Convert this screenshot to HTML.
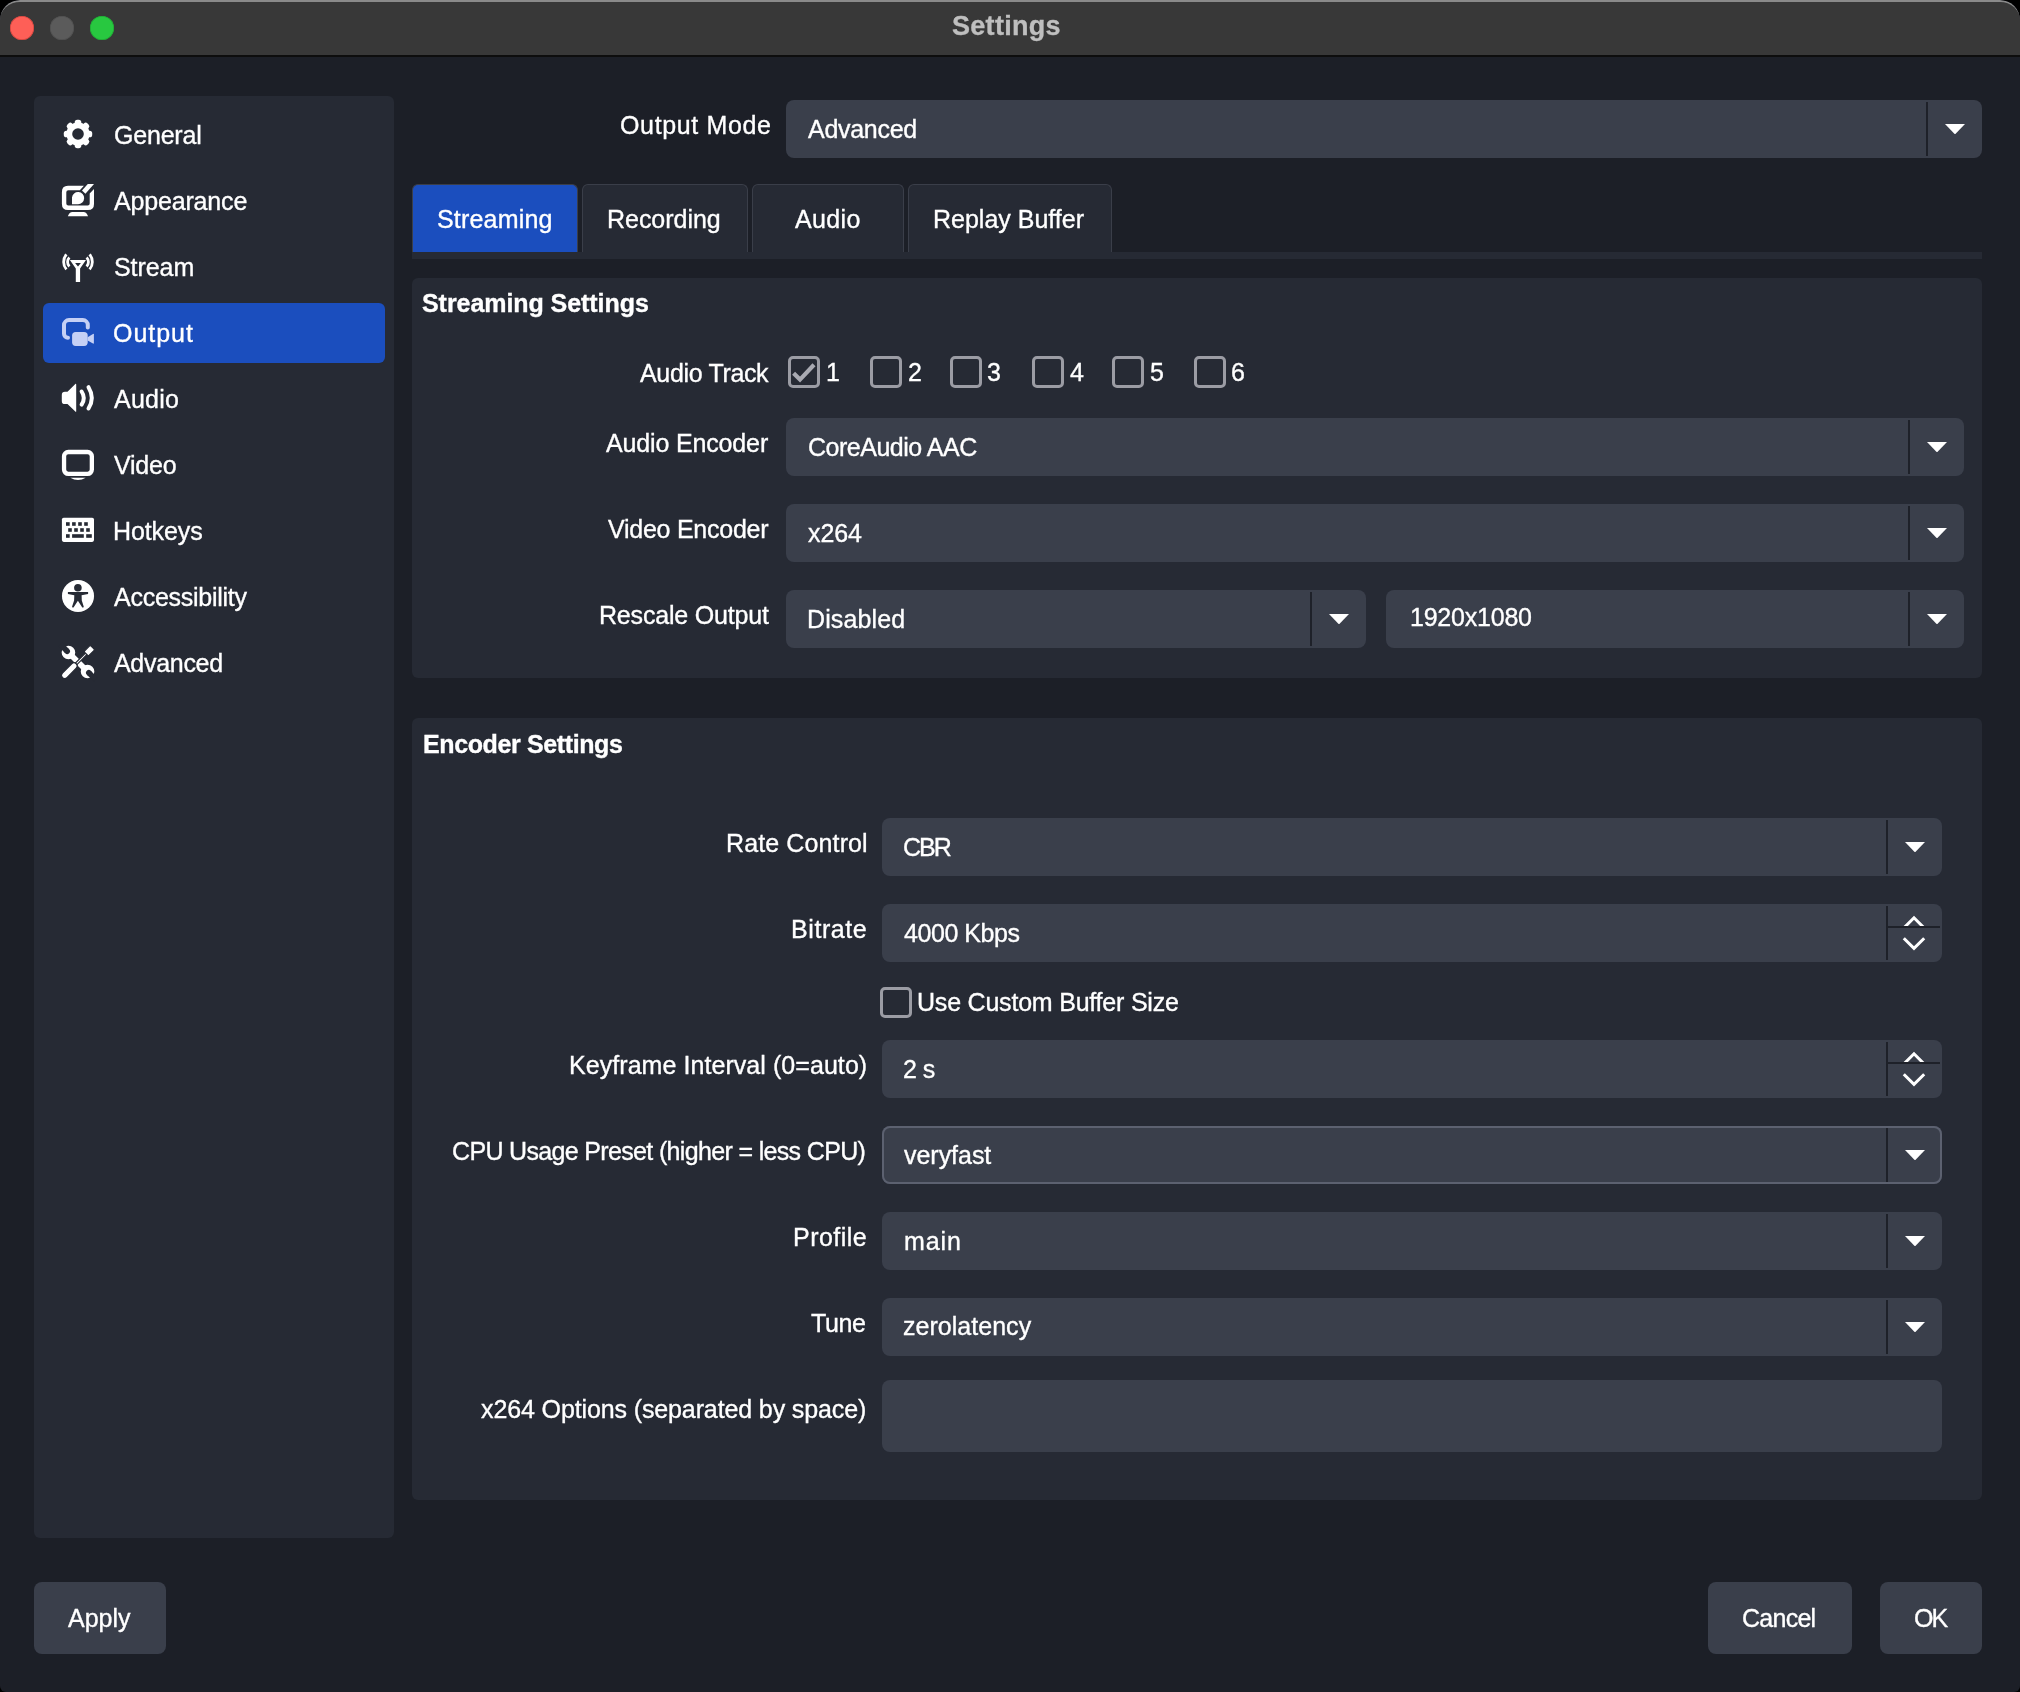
<!DOCTYPE html>
<html><head><meta charset="utf-8"><style>
html,body{margin:0;padding:0;width:2020px;height:1692px;overflow:hidden;background:#000000;}
*{box-sizing:border-box;}
body{font-family:"Liberation Sans",sans-serif;color:#fff;position:relative;}
.a{position:absolute;}
.win{position:absolute;left:0;top:0;width:2020px;height:1692px;background:#1c1f27;border-radius:20px 20px 6px 6px;overflow:hidden;}
.t{position:absolute;font-size:25px;line-height:25px;height:25px;white-space:pre;color:#ffffff;-webkit-text-stroke:0.35px currentColor;will-change:transform;}
</style></head><body>
<div class="win">
<div class="a" style="left:0;top:0;width:2020px;height:57px;background:#383838;border-top:2px solid #8a8a8a;border-bottom:2px solid #0d0d0d;border-radius:20px 20px 0 0;"></div>
<div class="a" style="left:10px;top:16px;width:24px;height:24px;border-radius:50%;background:#fe5f57;box-shadow:inset 0 0 0 0.7px #d1443d;"></div>
<div class="a" style="left:50px;top:16px;width:24px;height:24px;border-radius:50%;background:#5b5b5b;box-shadow:inset 0 0 0 0.7px #505050;"></div>
<div class="a" style="left:90px;top:16px;width:24px;height:24px;border-radius:50%;background:#28c840;box-shadow:inset 0 0 0 0.7px #1faa33;"></div>
<div class="t" style="left:952.0px;top:13.1px;font-size:27px;line-height:27px;height:27px;font-weight:700;letter-spacing:0.29px;color:#bfbfbf;">Settings</div>
<div class="a" style="left:34px;top:96px;width:360px;height:1441.5px;background:#262a34;border-radius:6px;"></div>
<div class="a" style="left:42.8px;top:303.2px;width:342.1px;height:59.4px;background:#1b4ebe;border-radius:6px;"></div>
<svg class="a" style="left:58px;top:114px;" width="40" height="40" viewBox="0 0 40 40">
 <g fill="#fff" transform="translate(20,20)">
  <circle r="11.6"/>
  <rect x="-3.3" y="-14.2" width="6.6" height="28.4" rx="2.6"/>
  <rect x="-3.3" y="-14.2" width="6.6" height="28.4" rx="2.6" transform="rotate(45)"/>
  <rect x="-3.3" y="-14.2" width="6.6" height="28.4" rx="2.6" transform="rotate(90)"/>
  <rect x="-3.3" y="-14.2" width="6.6" height="28.4" rx="2.6" transform="rotate(135)"/>
  <circle r="5.8" fill="#262a34"/>
 </g>
</svg>
<svg class="a" style="left:58px;top:180px;" width="40" height="40" viewBox="0 0 40 40">
 <path d="M25.9 5.8 L10 5.8 Q3.9 5.8 3.9 11.9 L3.9 24 Q3.9 30 10 30 L30 30 Q36 30 36 24 L36 9 L31.7 13.4 L31.7 23.6 Q31.7 25.6 29.7 25.6 L10.3 25.6 Q8.3 25.6 8.3 23.6 L8.3 12.2 Q8.3 10.2 10.3 10.2 L21.8 10.2 Z" fill="#fff"/>
 <path d="M29.8 4 L36 4 L27.4 13.7 L24 10.6 Z" fill="#fff"/>
 <path d="M14 24.2 L14 17.5 A6.1 6.1 0 1 1 20 24.2 Z" fill="#fff"/>
 <path d="M9.8 36.2 L30.1 36.2 Q28.5 31.9 25.5 31.9 L14.4 31.9 Q11.4 31.9 9.8 36.2 Z" fill="#fff"/>
</svg>
<svg class="a" style="left:58px;top:248px;" width="40" height="40" viewBox="0 0 40 40">
 <g fill="none" stroke="#fff" stroke-width="2.8">
  <path d="M8.4 6.4 A11.6 11.6 0 0 0 8.4 21.4"/>
  <path d="M11.4 9.6 A6.2 6.2 0 0 0 11.4 18.4"/>
  <path d="M31.6 6.4 A11.6 11.6 0 0 1 31.6 21.4"/>
  <path d="M28.6 9.6 A6.2 6.2 0 0 1 28.6 18.4"/>
 </g>
 <path fill="#fff" fill-rule="evenodd" d="M11.9 11.9 L28 11.9 L22.1 20.5 L22.1 34 L17.8 34 L17.8 20.5 Z M17.1 15.1 L22.9 15.1 L20 18.4 Z"/>
</svg>
<svg class="a" style="left:58px;top:313px;" width="40" height="40" viewBox="0 0 40 40">
 <path d="M29.8 14.6 L29.8 12.1 A5 5 0 0 0 24.8 7.1 L11 7.1 A5 5 0 0 0 6 12.1 L6 20.7 A4 4 0 0 0 10 24.7" fill="none" stroke="#c5d0f5" stroke-width="4" stroke-linecap="round"/>
 <rect x="14.1" y="18.9" width="15.6" height="14" rx="3.6" fill="#c5d0f5"/>
 <path d="M29.6 24.2 L35 20.9 Q35.9 20.5 35.9 21.5 L35.9 30 Q35.9 31 35 30.6 L29.6 27.6 Z" fill="#c5d0f5"/>
</svg>
<svg class="a" style="left:58px;top:378px;" width="40" height="40" viewBox="0 0 40 40">
 <path d="M17.6 5.8 Q18.2 5.6 18.2 6.6 L18.2 33.2 Q18.2 34.2 17.6 33.8 L9.5 26.1 L7 26.1 Q3.8 26.1 3.8 22.9 L3.8 16.9 Q3.8 13.7 7 13.7 L9.5 13.7 Z" fill="#fff"/>
 <g fill="none" stroke="#fff" stroke-width="4" stroke-linecap="round">
  <path d="M23.6 13.5 Q28 20.1 23.6 26.7"/>
  <path d="M30.5 9.2 Q37.1 19.9 30.5 30.5"/>
 </g>
</svg>
<svg class="a" style="left:58px;top:444px;" width="40" height="40" viewBox="0 0 40 40">
 <rect x="6.05" y="8" width="27.8" height="21.9" rx="4.3" fill="none" stroke="#fff" stroke-width="4.3"/>
 <path d="M12.3 33.7 L27.7 33.7 Q20 38.5 12.3 33.7 Z" fill="#fff"/>
</svg>
<svg class="a" style="left:58px;top:510px;" width="40" height="40" viewBox="0 0 40 40">
 <rect x="3.9" y="7.8" width="32.1" height="24.1" rx="1.8" fill="#fff"/>
 <g fill="#262a34">
  <rect x="8" y="12.2" width="3.7" height="3.6"/><rect x="14.1" y="12.2" width="3.6" height="3.6"/><rect x="20.2" y="12.2" width="3.6" height="3.6"/><rect x="26.2" y="12.2" width="3.6" height="3.6"/>
  <rect x="10.2" y="18.2" width="3.6" height="3.6"/><rect x="16.2" y="18.2" width="3.6" height="3.6"/><rect x="22.2" y="18.2" width="3.6" height="3.6"/><rect x="28.2" y="18.2" width="3.6" height="3.6"/>
  <rect x="8" y="24.2" width="3.7" height="3.6"/><rect x="14.1" y="24.2" width="11.7" height="3.6"/><rect x="28.2" y="24.2" width="5.6" height="3.6"/>
 </g>
</svg>
<svg class="a" style="left:58px;top:576px;" width="40" height="40" viewBox="0 0 40 40">
 <circle cx="20" cy="20" r="16.05" fill="#fff"/>
 <circle cx="19.9" cy="11.8" r="3.8" fill="#262a34"/>
 <path d="M9.9 16.1 L30.1 16.1 L30.1 18 L23.6 19.2 L23.8 24.5 L25.7 30.4 Q26 31.5 25 31.5 L24.3 31.5 L19.9 24.8 L15.5 31.5 L14.8 31.5 Q13.8 31.5 14.1 30.4 L16.1 24.5 L16.3 19.2 L9.9 18 Z" fill="#262a34"/>
</svg>
<svg class="a" style="left:58px;top:642px;" width="40" height="40" viewBox="0 0 40 40">
 <g transform="rotate(45 20 20)">
  <g fill="#fff">
   <rect x="6.5" y="17.2" width="27" height="5.6"/>
   <circle cx="6.5" cy="20" r="6.8"/>
   <circle cx="33.5" cy="20" r="6.8"/>
  </g>
  <g fill="#262a34">
   <rect x="-5" y="17.2" width="9.7" height="5.6"/>
   <circle cx="4.7" cy="20" r="2.8"/>
   <rect x="35.3" y="17.2" width="10" height="5.6"/>
   <circle cx="35.3" cy="20" r="2.8"/>
  </g>
 </g>
 <g transform="rotate(-45 20 20)">
  <g fill="#fff" stroke="#262a34" stroke-width="1.2">
   <rect x="16.5" y="18.9" width="16.5" height="2.2"/>
   <rect x="-2" y="16.8" width="19.5" height="6.4" rx="3.2"/>
   <rect x="31.5" y="16.8" width="9" height="6.4" rx="1.2"/>
  </g>
 </g>
</svg>

<div class="t" style="left:113.9px;top:122.8px;letter-spacing:-0.2px;">General</div>
<div class="t" style="left:114.0px;top:189.0px;letter-spacing:-0.17px;">Appearance</div>
<div class="t" style="left:113.7px;top:255.0px;letter-spacing:-0.06px;">Stream</div>
<div class="t" style="left:113.4px;top:321.2px;letter-spacing:0.96px;">Output</div>
<div class="t" style="left:114.0px;top:387.0px;letter-spacing:0.24px;">Audio</div>
<div class="t" style="left:114.0px;top:453.0px;letter-spacing:-0.24px;">Video</div>
<div class="t" style="left:113.4px;top:519.0px;letter-spacing:-0.1px;">Hotkeys</div>
<div class="t" style="left:114.0px;top:584.8px;letter-spacing:-0.26px;">Accessibility</div>
<div class="t" style="left:114.0px;top:651.0px;letter-spacing:-0.3px;">Advanced</div>
<div class="t" style="left:619.5px;top:113.0px;letter-spacing:0.64px;">Output Mode</div>
<div class="a" style="left:786px;top:100px;width:1196px;height:57.5px;background:#3a3f4b;border-radius:8px;"></div>
<div class="a" style="left:1926px;top:102px;width:2px;height:53.5px;background:#1e2129;"></div>
<svg class="a" style="left:1945.4px;top:123.6px;" width="20" height="10.4" viewBox="0 0 20 10.4"><path d="M0 0 L20 0 L10 10.4 Z" fill="#fff"/></svg>
<div class="t" style="left:808.0px;top:117.2px;letter-spacing:-0.29px;">Advanced</div>
<div class="a" style="left:412px;top:252.3px;width:1570px;height:7.2px;background:#262a34;"></div>
<div class="a" style="left:412px;top:184px;width:166px;height:68.3px;background:#1b4ebe;border:1.5px solid #3a3e49;border-bottom:none;border-radius:6px 6px 0 0;"></div>
<div class="a" style="left:582px;top:184px;width:166.20000000000005px;height:68.3px;background:#262a34;border:1.7px solid #3a3e49;border-bottom:none;border-radius:6px 6px 0 0;"></div>
<div class="a" style="left:752px;top:184px;width:151.60000000000002px;height:68.3px;background:#262a34;border:1.7px solid #3a3e49;border-bottom:none;border-radius:6px 6px 0 0;"></div>
<div class="a" style="left:908px;top:184px;width:203.5999999999999px;height:68.3px;background:#262a34;border:1.7px solid #3a3e49;border-bottom:none;border-radius:6px 6px 0 0;"></div>
<div class="t" style="left:437.0px;top:206.8px;letter-spacing:0.19px;">Streaming</div>
<div class="t" style="left:607.3px;top:206.8px;letter-spacing:-0.03px;">Recording</div>
<div class="t" style="left:794.9px;top:206.8px;letter-spacing:0.38px;">Audio</div>
<div class="t" style="left:933.4px;top:206.8px;">Replay Buffer</div>
<div class="a" style="left:412px;top:278px;width:1570px;height:400px;background:#262a34;border-radius:6px;"></div>
<div class="t" style="left:422.0px;top:290.6px;font-weight:700;letter-spacing:-0.06px;">Streaming Settings</div>
<div class="t" style="left:639.6px;top:360.6px;letter-spacing:-0.34px;">Audio Track</div>
<div class="a" style="left:788.2px;top:356.2px;width:31.4px;height:31.6px;border:3px solid #9b9ca4;border-radius:5px;"></div>
<svg class="a" style="left:780.0px;top:345.1px;" width="50" height="50" viewBox="0 0 50 50"><path d="M13.6 28.3 L20 34.6 L34 19.8" fill="none" stroke="#a9aab2" stroke-width="4.2"/></svg>
<div class="t" style="left:826.0px;top:360.0px;">1</div>
<div class="a" style="left:870.2px;top:356.2px;width:31.4px;height:31.6px;border:3px solid #9b9ca4;border-radius:5px;"></div>
<div class="t" style="left:907.8px;top:360.0px;">2</div>
<div class="a" style="left:950.3px;top:356.2px;width:31.4px;height:31.6px;border:3px solid #9b9ca4;border-radius:5px;"></div>
<div class="t" style="left:987.3px;top:360.0px;">3</div>
<div class="a" style="left:1032.2px;top:356.2px;width:31.4px;height:31.6px;border:3px solid #9b9ca4;border-radius:5px;"></div>
<div class="t" style="left:1069.9px;top:360.0px;">4</div>
<div class="a" style="left:1112.4px;top:356.2px;width:31.4px;height:31.6px;border:3px solid #9b9ca4;border-radius:5px;"></div>
<div class="t" style="left:1149.7px;top:360.0px;">5</div>
<div class="a" style="left:1194.3px;top:356.2px;width:31.4px;height:31.6px;border:3px solid #9b9ca4;border-radius:5px;"></div>
<div class="t" style="left:1231.3px;top:360.0px;">6</div>
<div class="t" style="left:605.8px;top:431.0px;letter-spacing:-0.15px;">Audio Encoder</div>
<div class="a" style="left:786px;top:418.2px;width:1177.6px;height:57.5px;background:#3a3f4b;border-radius:8px;"></div>
<div class="a" style="left:1907.6px;top:420.2px;width:2.0px;height:53.5px;background:#1e2129;"></div>
<svg class="a" style="left:1927.0px;top:441.8px;" width="20" height="10.4" viewBox="0 0 20 10.4"><path d="M0 0 L20 0 L10 10.4 Z" fill="#fff"/></svg>
<div class="t" style="left:807.6px;top:435.0px;letter-spacing:-0.49px;">CoreAudio AAC</div>
<div class="t" style="left:608.2px;top:516.6px;letter-spacing:-0.25px;">Video Encoder</div>
<div class="a" style="left:786px;top:504.3px;width:1177.6px;height:57.5px;background:#3a3f4b;border-radius:8px;"></div>
<div class="a" style="left:1907.6px;top:506.3px;width:2.0px;height:53.5px;background:#1e2129;"></div>
<svg class="a" style="left:1927.0px;top:527.9px;" width="20" height="10.4" viewBox="0 0 20 10.4"><path d="M0 0 L20 0 L10 10.4 Z" fill="#fff"/></svg>
<div class="t" style="left:808.3px;top:520.5px;letter-spacing:-0.1px;">x264</div>
<div class="t" style="left:598.8px;top:602.9px;letter-spacing:-0.18px;">Rescale Output</div>
<div class="a" style="left:786px;top:590.2px;width:579.6px;height:57.5px;background:#3a3f4b;border-radius:8px;"></div>
<div class="a" style="left:1309.6px;top:592.2px;width:2.0px;height:53.5px;background:#1e2129;"></div>
<svg class="a" style="left:1329.0px;top:613.8px;" width="20" height="10.4" viewBox="0 0 20 10.4"><path d="M0 0 L20 0 L10 10.4 Z" fill="#fff"/></svg>
<div class="t" style="left:807.1px;top:606.9px;letter-spacing:0.12px;">Disabled</div>
<div class="a" style="left:1386px;top:590.2px;width:577.6px;height:57.5px;background:#3a3f4b;border-radius:8px;"></div>
<div class="a" style="left:1907.6px;top:592.2px;width:2.0px;height:53.5px;background:#1e2129;"></div>
<svg class="a" style="left:1927.0px;top:613.8px;" width="20" height="10.4" viewBox="0 0 20 10.4"><path d="M0 0 L20 0 L10 10.4 Z" fill="#fff"/></svg>
<div class="t" style="left:1409.9px;top:605.0px;letter-spacing:-0.22px;">1920x1080</div>
<div class="a" style="left:412px;top:718px;width:1570px;height:782.2px;background:#262a34;border-radius:6px;"></div>
<div class="t" style="left:422.8px;top:731.9px;font-weight:700;letter-spacing:-0.38px;">Encoder Settings</div>
<div class="t" style="left:725.6px;top:831.0px;letter-spacing:0.12px;">Rate Control</div>
<div class="a" style="left:881.7px;top:818.1px;width:1060.0px;height:57.5px;background:#3a3f4b;border-radius:8px;"></div>
<div class="a" style="left:1885.7px;top:820.1px;width:2.0px;height:53.5px;background:#1e2129;"></div>
<svg class="a" style="left:1905.1px;top:841.7px;" width="20" height="10.4" viewBox="0 0 20 10.4"><path d="M0 0 L20 0 L10 10.4 Z" fill="#fff"/></svg>
<div class="t" style="left:903.3px;top:835.1px;letter-spacing:-2.0px;">CBR</div>
<div class="t" style="left:790.6px;top:917.1px;letter-spacing:0.58px;">Bitrate</div>
<div class="a" style="left:881.7px;top:904.2px;width:1060.0px;height:57.4px;background:#3a3f4b;border-radius:8px;"></div>
<div class="a" style="left:1886.2px;top:906.2px;width:2.0px;height:53.4px;background:#1e2129;"></div>
<svg class="a" style="left:1899.7px;top:904.2px;" width="28" height="57" viewBox="0 0 28 57"><g fill="none" stroke="#fff" stroke-width="3" stroke-linecap="butt"><clipPath id="cu904"><rect x="0" y="0" width="28" height="22.3"/></clipPath><path d="M3.6 24.2 L14 13.8 L24.4 24.2" clip-path="url(#cu904)"/><path d="M3.8 34.2 L14 44.4 L24.2 34.2"/></g></svg>
<div class="a" style="left:1888.2px;top:926.2px;width:51.5px;height:2.0px;background:#1e2129;"></div>
<div class="t" style="left:904.0px;top:921.1px;letter-spacing:-0.44px;">4000 Kbps</div>
<div class="a" style="left:880.3px;top:986.6px;width:31.4px;height:31.6px;border:3px solid #9b9ca4;border-radius:5px;"></div>
<div class="t" style="left:917.0px;top:990.2px;letter-spacing:-0.21px;">Use Custom Buffer Size</div>
<div class="t" style="left:568.7px;top:1053.4px;letter-spacing:0.06px;">Keyframe Interval (0=auto)</div>
<div class="a" style="left:881.7px;top:1040.4px;width:1060.0px;height:57.4px;background:#3a3f4b;border-radius:8px;"></div>
<div class="a" style="left:1886.2px;top:1042.4px;width:2.0px;height:53.4px;background:#1e2129;"></div>
<svg class="a" style="left:1899.7px;top:1040.4px;" width="28" height="57" viewBox="0 0 28 57"><g fill="none" stroke="#fff" stroke-width="3" stroke-linecap="butt"><clipPath id="cu1040"><rect x="0" y="0" width="28" height="22.3"/></clipPath><path d="M3.6 24.2 L14 13.8 L24.4 24.2" clip-path="url(#cu1040)"/><path d="M3.8 34.2 L14 44.4 L24.2 34.2"/></g></svg>
<div class="a" style="left:1888.2px;top:1062.4px;width:51.5px;height:2.0px;background:#1e2129;"></div>
<div class="t" style="left:902.9px;top:1056.7px;letter-spacing:-0.6px;">2 s</div>
<div class="t" style="left:452.4px;top:1139.0px;letter-spacing:-0.66px;">CPU Usage Preset (higher = less CPU)</div>
<div class="a" style="left:881.7px;top:1126px;width:1060.0px;height:57.7px;background:#3a3f4b;border-radius:8px;box-shadow:inset 0 0 0 2px #5c6170;"></div>
<div class="a" style="left:1885.7px;top:1128px;width:2.0px;height:53.7px;background:#1e2129;"></div>
<svg class="a" style="left:1905.1px;top:1149.6px;" width="20" height="10.4" viewBox="0 0 20 10.4"><path d="M0 0 L20 0 L10 10.4 Z" fill="#fff"/></svg>
<div class="t" style="left:903.9px;top:1143.0px;letter-spacing:-0.03px;">veryfast</div>
<div class="t" style="left:792.9px;top:1224.9px;letter-spacing:0.46px;">Profile</div>
<div class="a" style="left:881.7px;top:1212px;width:1060.0px;height:57.5px;background:#3a3f4b;border-radius:8px;"></div>
<div class="a" style="left:1885.7px;top:1214px;width:2.0px;height:53.5px;background:#1e2129;"></div>
<svg class="a" style="left:1905.1px;top:1235.6px;" width="20" height="10.4" viewBox="0 0 20 10.4"><path d="M0 0 L20 0 L10 10.4 Z" fill="#fff"/></svg>
<div class="t" style="left:903.8px;top:1228.9px;letter-spacing:0.87px;">main</div>
<div class="t" style="left:811.2px;top:1310.6px;letter-spacing:-0.36px;">Tune</div>
<div class="a" style="left:881.7px;top:1298.2px;width:1060.0px;height:57.5px;background:#3a3f4b;border-radius:8px;"></div>
<div class="a" style="left:1885.7px;top:1300.2px;width:2.0px;height:53.5px;background:#1e2129;"></div>
<svg class="a" style="left:1905.1px;top:1321.8px;" width="20" height="10.4" viewBox="0 0 20 10.4"><path d="M0 0 L20 0 L10 10.4 Z" fill="#fff"/></svg>
<div class="t" style="left:903.4px;top:1314.3px;letter-spacing:0.03px;">zerolatency</div>
<div class="t" style="left:481.0px;top:1396.8px;letter-spacing:-0.12px;">x264 Options (separated by space)</div>
<div class="a" style="left:881.7px;top:1380px;width:1060.0px;height:72px;background:#3a3f4b;border-radius:8px;"></div>
<div class="a" style="left:34px;top:1582px;width:132px;height:72px;background:#3a3f4b;border-radius:8px;"></div>
<div class="t" style="left:68.1px;top:1606.1px;">Apply</div>
<div class="a" style="left:1708px;top:1582px;width:144px;height:72px;background:#3a3f4b;border-radius:8px;"></div>
<div class="t" style="left:1742.4px;top:1606.0px;letter-spacing:-0.74px;">Cancel</div>
<div class="a" style="left:1880px;top:1582px;width:102px;height:72px;background:#3a3f4b;border-radius:8px;"></div>
<div class="t" style="left:1913.8px;top:1606.0px;letter-spacing:-2.0px;">OK</div>
</div>
</body></html>
